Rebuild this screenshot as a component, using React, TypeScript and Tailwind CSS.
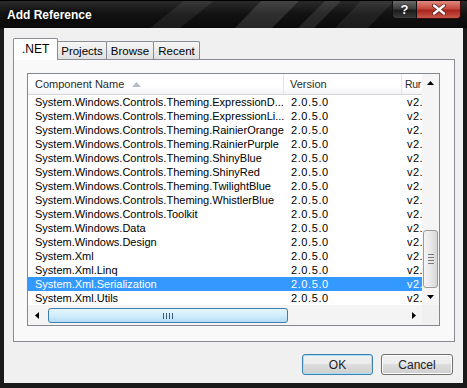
import React from "react";

const rows = [
  "System.Windows.Controls.Theming.ExpressionD...",
  "System.Windows.Controls.Theming.ExpressionLi...",
  "System.Windows.Controls.Theming.RainierOrange",
  "System.Windows.Controls.Theming.RainierPurple",
  "System.Windows.Controls.Theming.ShinyBlue",
  "System.Windows.Controls.Theming.ShinyRed",
  "System.Windows.Controls.Theming.TwilightBlue",
  "System.Windows.Controls.Theming.WhistlerBlue",
  "System.Windows.Controls.Toolkit",
  "System.Windows.Data",
  "System.Windows.Design",
  "System.Xml",
  "System.Xml.Linq",
  "System.Xml.Serialization",
  "System.Xml.Utils",
];

const SELECTED = 13;

function Arrow({ dir }: { dir: "up" | "down" | "left" | "right" }) {
  const pts =
    dir === "up"
      ? "0,4 3.5,0 7,4"
      : dir === "down"
      ? "0,0 7,0 3.5,4"
      : dir === "left"
      ? "4,0 4,7 0,3.5"
      : "0,0 0,7 4,3.5";
  const w = dir === "up" || dir === "down" ? 7 : 4;
  const h = dir === "up" || dir === "down" ? 4 : 7;
  return (
    <svg width={w} height={h} viewBox={`0 0 ${w} ${h}`}>
      <polygon points={pts} fill="#000" />
    </svg>
  );
}

export default function App() {
  return (
    <div className="w-[467px] h-[388px] bg-[#1a1a1a] flex flex-col px-[4px] pb-[5px] overflow-hidden font-['Liberation_Sans',Arial,sans-serif] relative">
      {/* title bar */}
      <div className="h-[28px] -mx-[4px] flex items-start relative">
        <svg className="absolute inset-0" width="467" height="28" viewBox="0 0 467 28">
          <defs>
            <linearGradient id="tb" x1="0" y1="0" x2="0" y2="1">
              <stop offset="0" stopColor="#2c2c2c" />
              <stop offset="0.5" stopColor="#121212" />
              <stop offset="1" stopColor="#0a0a0a" />
            </linearGradient>
          </defs>
          <rect width="467" height="28" fill="url(#tb)" />
          <polygon points="150,28 185,0 215,0 180,28" fill="#fff" opacity="0.07" />
          <polygon points="235,28 262,0 300,0 272,28" fill="#fff" opacity="0.12" />
          <polygon points="298,28 326,0 342,0 314,28" fill="#fff" opacity="0.1" />
          <polygon points="335,28 362,0 395,0 368,28" fill="#fff" opacity="0.07" />
          <rect width="467" height="1" fill="#000" />
        </svg>
        <span className="relative pl-[7px] pt-[9px] text-[12px] leading-[12px] font-bold text-white [text-shadow:0_0_4px_rgba(0,0,0,0.9)]">
          Add Reference
        </span>
        <div className="relative ml-auto mr-[6px] mt-[1px] flex h-[18px]">
          <div className="w-[25px] h-[18px] rounded-bl-[4px] border border-[#111] border-t-0 bg-[linear-gradient(to_bottom,#6a6a6a_0%,#3c3c3c_45%,#1c1c1c_55%,#3a3a3a_100%)] flex items-center justify-center text-white text-[13px] font-bold leading-none [text-shadow:0_0_2px_#000]">
            ?
          </div>
          <div className="w-[44px] h-[18px] rounded-br-[4px] border border-[#3a0a0a] border-t-0 border-l-0 bg-[linear-gradient(to_bottom,#e08a80_0%,#c5483e_45%,#a8241c_55%,#c9574b_100%)] flex items-center justify-center">
            <svg width="14" height="11" viewBox="0 0 14 11">
              <path d="M2 1.5 L12 9.5 M12 1.5 L2 9.5" stroke="#5a1a14" strokeWidth="4" strokeLinecap="round" />
              <path d="M2 1.5 L12 9.5 M12 1.5 L2 9.5" stroke="#fff" strokeWidth="2.4" strokeLinecap="round" />
            </svg>
          </div>
        </div>
      </div>

      {/* client */}
      <div className="flex-1 bg-[#f0f0f0] flex flex-col pl-[9px] pr-[8px] pt-[10px] text-[11px] text-black">
        {/* tabs */}
        <div className="h-[21px] flex items-end relative z-10">
          <div className="w-[45px] h-[22px] -mb-px bg-white border border-[#898c95] border-b-0 rounded-t-[2px] pl-[8px] pt-[4px] leading-[13px] text-[12px]">
            .NET
          </div>
          <div className="w-[50px] h-[18px] -ml-px border border-[#898c95] border-b-0 rounded-t-[2px] bg-[linear-gradient(to_bottom,#f6f6f6,#e0e0e0)] text-center pt-[2px] leading-[14px] text-[11.5px]">
            Projects
          </div>
          <div className="w-[48px] h-[18px] -ml-px border border-[#898c95] border-b-0 rounded-t-[2px] bg-[linear-gradient(to_bottom,#f6f6f6,#e0e0e0)] text-center pt-[2px] leading-[14px] text-[11.5px]">
            Browse
          </div>
          <div className="w-[47px] h-[18px] -ml-px border border-[#898c95] border-b-0 rounded-t-[2px] bg-[linear-gradient(to_bottom,#f6f6f6,#e0e0e0)] text-center pt-[2px] leading-[14px] text-[11.5px]">
            Recent
          </div>
        </div>

        {/* panel */}
        <div className="w-[442px] h-[283px] border border-[#898c95] bg-[#f9f9f9] pt-[13px] pl-[13px]">
          <div className="w-[413px] h-[253px] border border-[#828790] bg-white flex flex-col">
            <div className="h-[231px] flex">
              <div className="w-[394px] flex flex-col overflow-hidden">
                {/* header */}
                <div className="h-[21px] flex bg-[linear-gradient(to_bottom,#ffffff_0%,#ffffff_60%,#f3f4f6_100%)] border-b border-[#d5d5d5] text-[#2a2a2a] leading-[20px]">
                  <div className="w-[256px] shrink-0 pl-[7px] border-r border-[#e3e4e6] flex items-center">
                    <span>Component Name</span>
                    <svg className="ml-[8px]" width="9" height="5" viewBox="0 0 9 5">
                      <polygon points="0,5 4.5,0 9,5" fill="#b6bcc6" />
                    </svg>
                  </div>
                  <div className="w-[118px] shrink-0 pl-[6px] border-r border-[#e3e4e6]">Version</div>
                  <div className="pl-[3px] whitespace-nowrap text-[10.5px] tracking-[-0.3px]">Rur</div>
                </div>
                {/* rows */}
                {rows.map((r, i) => {
                  const sel = i === SELECTED;
                  return (
                    <div
                      key={r}
                      className={
                        "h-[14px] leading-[14px] flex whitespace-nowrap " +
                        (sel ? "bg-[#3399ff] text-white" : "")
                      }
                    >
                      <div className="w-[256px] shrink-0 pl-[7px] overflow-hidden">{r}</div>
                      <div className="w-[118px] shrink-0 pl-[7px] tracking-[0.6px]">2.0.5.0</div>
                      <div className="pl-[5px] tracking-[0.4px]">v2.</div>
                    </div>
                  );
                })}
              </div>
              {/* vertical scrollbar */}
              <div className="w-[17px] flex flex-col bg-[#f5f5f5]">
                <div className="h-[17px] flex items-center justify-center">
                  <Arrow dir="up" />
                </div>
                <div className="h-[139px]" />
                <div className="h-[58px] mx-[1px] rounded-[3px] border border-[#9a9a9a] bg-[linear-gradient(to_right,#f4f4f4,#e8e8e8_50%,#d6d6d6)] flex flex-col items-center justify-center gap-[2px]">
                  <div className="w-[6px] h-px bg-[#7a7a7a]" />
                  <div className="w-[6px] h-px bg-[#7a7a7a]" />
                  <div className="w-[6px] h-px bg-[#7a7a7a]" />
                  <div className="w-[6px] h-px bg-[#7a7a7a]" />
                </div>
                <div className="h-[17px] flex items-center justify-center">
                  <Arrow dir="down" />
                </div>
              </div>
            </div>
            {/* horizontal scrollbar */}
            <div className="h-[20px] flex">
              <div className="w-[394px] flex bg-[#f4f4f4]">
                <div className="w-[17px] flex items-center justify-center pt-[1px]">
                  <Arrow dir="left" />
                </div>
                <div className="w-[3px]" />
                <div className="mt-[3px] w-[240px] h-[15px] rounded-[3px] border border-[#3c7fb1] bg-[linear-gradient(to_bottom,#e6f5fd,#d2edfb_50%,#b4dcf5)] flex items-center justify-center gap-[2px]">
                  <div className="w-px h-[6px] bg-[#3c5a7a]" />
                  <div className="w-px h-[6px] bg-[#3c5a7a]" />
                  <div className="w-px h-[6px] bg-[#3c5a7a]" />
                  <div className="w-px h-[6px] bg-[#3c5a7a]" />
                </div>
                <div className="flex-1" />
                <div className="w-[17px] flex items-center justify-center pt-[1px]">
                  <Arrow dir="right" />
                </div>
              </div>
              <div className="w-[17px] bg-[#f0f0f0]" />
            </div>
          </div>
        </div>

        {/* buttons */}
        <div className="mt-[12px] flex justify-end gap-[8px] mr-[2px]">
          <div className="w-[71px] h-[21px] rounded-[3px] border border-[#3c7fb1] shadow-[inset_0_0_0_1px_#a6e0f8] bg-[linear-gradient(to_bottom,#f2f2f2_0%,#ebebeb_50%,#dddddd_50%,#cfcfcf_100%)] flex items-center justify-center text-[12px] text-[#222]">
            OK
          </div>
          <div className="w-[72px] h-[21px] rounded-[3px] border border-[#707070] shadow-[inset_0_0_0_1px_#fcfcfc] bg-[linear-gradient(to_bottom,#f2f2f2_0%,#ebebeb_50%,#dddddd_50%,#cfcfcf_100%)] flex items-center justify-center text-[12px] text-[#222]">
            Cancel
          </div>
        </div>
      </div>
    </div>
  );
}
